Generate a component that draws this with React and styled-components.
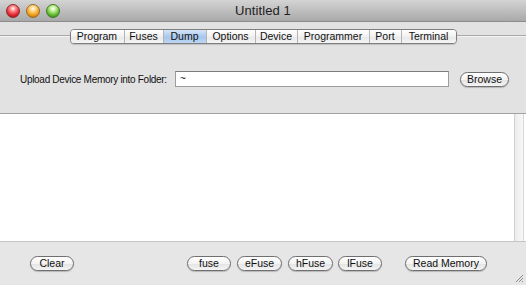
import React, {useState} from 'react';
import styled, {createGlobalStyle} from 'styled-components';

const GlobalStyle = createGlobalStyle`
  html, body {
    margin: 0;
    padding: 0;
    background: #e2e2e2;
  }
  body {
    font-family: "Liberation Sans", Arial, sans-serif;
  }
`;

const Window = styled.div`
  width: 526px;
  height: 285px;
  display: flex;
  flex-direction: column;
  background: #e2e2e2;
  overflow: hidden;
`;

const TitleBar = styled.div`
  height: 22px;
  flex: none;
  display: flex;
  align-items: center;
  background: linear-gradient(to bottom, #d4d4d4, #a9a9a9);
  border-bottom: 1px solid #8c8c8c;
  box-sizing: border-box;
  padding-left: 6px;
`;

const Lights = styled.div`
  display: flex;
  gap: 6px;
`;

const Light = styled.div`
  width: 14px;
  height: 14px;
  border-radius: 50%;
  box-sizing: border-box;
  border: 1px solid ${p => p.$edge};
  background: radial-gradient(circle at 50% 30%, #ffffff 0, ${p => p.$light} 25%, ${p => p.$color} 65%, ${p => p.$dark} 100%);
`;

const Title = styled.div`
  flex: 1;
  text-align: center;
  font-size: 13px;
  color: #222;
  margin-right: 60px;
  letter-spacing: 0.1px;
`;

const TabRow = styled.div`
  margin-top: 7px;
  height: 15px;
  display: flex;
  justify-content: center;
  background: linear-gradient(to bottom, transparent 6px, #a8a8a8 6px, #a8a8a8 7px, #f4f4f4 7px, #f4f4f4 8px, transparent 8px);
`;

const Tabs = styled.div`
  display: flex;
  border: 1px solid #7e7e7e;
  border-radius: 4px;
  overflow: hidden;
  box-shadow: 0 1px 1px rgba(0,0,0,0.15);
`;

const Tab = styled.div`
  width: ${p => p.$w}px;
  box-sizing: border-box;
  height: 13px;
  line-height: 13px;
  text-align: center;
  font-size: 10.5px;
  color: #111;
  border-left: ${p => p.$first ? 'none' : '1px solid #b5b5b5'};
  background: ${p => p.$active
    ? 'linear-gradient(to bottom, #d6e6f8, #a7c6ec 55%, #bcd6f4)'
    : 'linear-gradient(to bottom, #ffffff, #f1f1f1 50%, #e7e7e7 51%, #f5f5f5)'};
`;

const UploadRow = styled.div`
  margin-top: 27px;
  display: flex;
  align-items: center;
  padding-left: 20px;
  height: 16px;
`;

const Label = styled.span`
  font-size: 10px;
  letter-spacing: -0.3px;
  color: #111;
  width: 155px;
  flex: none;
  white-space: nowrap;
  overflow: hidden;
`;

const PathInput = styled.div`
  width: 274px;
  height: 16px;
  box-sizing: border-box;
  background: #fff;
  border: 1px solid #9d9d9d;
  border-top-color: #7c7c7c;
  font-size: 10px;
  padding-left: 4px;
  line-height: 13px;
  color: #111;
  flex: none;
`;

const Button = styled.div`
  width: ${p => p.$w}px;
  height: 15px;
  box-sizing: border-box;
  border: 1px solid #6f6f6f;
  border-radius: 8px;
  background: linear-gradient(to bottom, #ffffff, #f3f3f3 50%, #e4e4e4 52%, #f4f4f4);
  box-shadow: 0 1px 1px rgba(0,0,0,0.2);
  font-size: 10.5px;
  line-height: 13px;
  text-align: center;
  color: #111;
  margin-left: ${p => p.$ml || 0}px;
  flex: none;
`;

const Output = styled.div`
  margin-top: 26px;
  height: 129px;
  flex: none;
  display: flex;
  background: #fff;
  border-top: 1px solid #a2a2a2;
  border-bottom: 1px solid #c6c6c6;
  box-sizing: border-box;
`;

const OutputText = styled.div`
  flex: 1;
`;

const ScrollTrack = styled.div`
  width: 8px;
  margin-right: 2px;
  border-left: 1px solid #d0d0d0;
  border-right: 1px solid #d8d8d8;
  background: linear-gradient(to right, #ececec, #f8f8f8);
`;

const Footer = styled.div`
  flex: 1;
  display: flex;
  align-items: flex-start;
  padding: 14px 0 0 30px;
  background: #e6e6e6;
`;

const Grip = styled.svg`
  margin-left: auto;
  align-self: flex-end;
  margin-right: 2px;
  margin-bottom: 2px;
`;

const tabs = [
  ['Program', 53], ['Fuses', 39], ['Dump', 43], ['Options', 49],
  ['Device', 42], ['Programmer', 72], ['Port', 32], ['Terminal', 55],
];

const App = () => {
  const [active, setActive] = useState('Dump');
  return (
    <Window>
      <GlobalStyle/>
      <TitleBar>
        <Lights>
          <Light $color="#e0222b" $light="#ff8f8f" $dark="#8c0c12" $edge="#8a2a2a"/>
          <Light $color="#ef9a12" $light="#ffd98a" $dark="#9a5a04" $edge="#9a6a2a"/>
          <Light $color="#5cb52c" $light="#c5f29a" $dark="#2c6a10" $edge="#3f7a2a"/>
        </Lights>
        <Title>Untitled 1</Title>
      </TitleBar>
      <TabRow>
        <Tabs>
          {tabs.map(([name, w], i) => (
            <Tab key={name} $w={w} $first={i === 0} $active={name === active}
                 onClick={() => setActive(name)}>{name}</Tab>
          ))}
        </Tabs>
      </TabRow>
      <UploadRow>
        <Label>Upload Device Memory into Folder:</Label>
        <PathInput>~</PathInput>
        <Button $w={49} $ml={11}>Browse</Button>
      </UploadRow>
      <Output>
        <OutputText/>
        <ScrollTrack/>
      </Output>
      <Footer>
        <Button $w={44}>Clear</Button>
        <Button $w={44} $ml={113}>fuse</Button>
        <Button $w={45} $ml={6}>eFuse</Button>
        <Button $w={45} $ml={6}>hFuse</Button>
        <Button $w={44} $ml={5}>lFuse</Button>
        <Button $w={82} $ml={23}>Read Memory</Button>
        <Grip width="10" height="10" viewBox="0 0 10 10">
          <path d="M9 2 L2 9 M9 5 L5 9 M9 8 L8 9" stroke="#8a8a8a" strokeWidth="1"/>
        </Grip>
      </Footer>
    </Window>
  );
};

export default App;
